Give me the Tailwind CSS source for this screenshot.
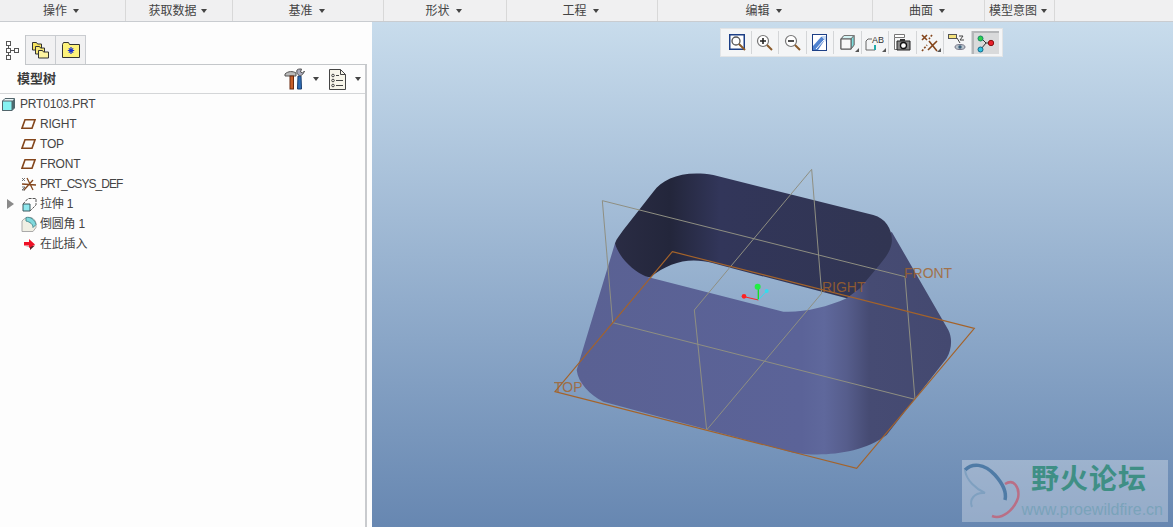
<!DOCTYPE html>
<html lang="en">
<head>
    <meta charset="UTF-8">
    <title>PRT0103</title>
    <script src="https://cdn.jsdelivr.net/npm/@tailwindcss/browser@4"></script>
</head>
<body class="w-[1173px] h-[527px] overflow-hidden bg-white font-['Liberation_Sans','Noto_Sans_CJK_SC',sans-serif] text-[12px] text-[#444]">
    <!-- menu groups -->
    <div class="flex h-[22px] bg-[#f0f0f1] border-b border-[#c9ccd0]">
        <div class="w-[126px] pr-[3px] flex items-center justify-center gap-[6px] border-r border-[#d8d8d8]">操作<span class="w-0 h-0 border-x-[3px] border-x-transparent border-t-[4px] border-t-[#444]"></span></div>
        <div class="w-[107px] pr-[3px] flex items-center justify-center gap-[4px] border-r border-[#d8d8d8]">获取数据<span class="w-0 h-0 border-x-[3px] border-x-transparent border-t-[4px] border-t-[#444]"></span></div>
        <div class="w-[151px] pr-[3px] flex items-center justify-center gap-[6px] border-r border-[#d8d8d8]">基准<span class="w-0 h-0 border-x-[3px] border-x-transparent border-t-[4px] border-t-[#444]"></span></div>
        <div class="w-[123px] pr-[3px] flex items-center justify-center gap-[6px] border-r border-[#d8d8d8]">形状<span class="w-0 h-0 border-x-[3px] border-x-transparent border-t-[4px] border-t-[#444]"></span></div>
        <div class="w-[151px] pr-[3px] flex items-center justify-center gap-[6px] border-r border-[#d8d8d8]">工程<span class="w-0 h-0 border-x-[3px] border-x-transparent border-t-[4px] border-t-[#444]"></span></div>
        <div class="w-[215px] pr-[3px] flex items-center justify-center gap-[6px] border-r border-[#d8d8d8]">编辑<span class="w-0 h-0 border-x-[3px] border-x-transparent border-t-[4px] border-t-[#444]"></span></div>
        <div class="w-[112px] pr-[3px] flex items-center justify-center gap-[6px] border-r border-[#d8d8d8]">曲面<span class="w-0 h-0 border-x-[3px] border-x-transparent border-t-[4px] border-t-[#444]"></span></div>
        <div class="w-[70px] pr-[3px] flex items-center justify-center gap-[4px] border-r border-[#d8d8d8]">模型意图<span class="w-0 h-0 border-x-[3px] border-x-transparent border-t-[4px] border-t-[#444]"></span></div>
    </div>

    <div class="flex h-[505px]">
        <!-- model tree panel -->
        <div class="w-[372px] shrink-0 bg-[#fdfdfd] pr-[5px]">
            <div class="flex h-[43px] items-end border-b border-[#c4c7ca]">
                <div class="w-[26px] h-[30px] -mb-px bg-[#fdfdfd] border-r border-[#c4c7ca] flex items-center justify-center">
                    <svg width="16" height="20" viewBox="0 0 16 20" fill="none" stroke="#555"><rect x="1.500" y="1.500" width="4" height="4"/><rect x="1.500" y="8.500" width="4" height="4"/><rect x="1.500" y="15.500" width="4" height="4"/><rect x="9.500" y="8.500" width="4" height="4"/><path d="M3.500 5.500v3M3.500 12.500v3M5.500 10.500h4"/></svg>
                </div>
                <div class="w-[30px] h-[29px] bg-[#f1f1f2] border-r border-t border-[#c9ccd0] flex items-center justify-center">
                    <svg width="20" height="20" viewBox="0 0 20 20"><path d="M1.500 2.500h4l1 1.500h4v6h-9z" fill="#f5e35e" stroke="#333"/><path d="M4.500 6.500h4l1 1.500h4v6h-9z" fill="#f7e97a" stroke="#333"/><path d="M7.500 10.500h4l1 1.500h5v6h-10z" fill="#fdf3a0" stroke="#333"/></svg>
                </div>
                <div class="w-[30px] h-[29px] bg-[#f1f1f2] border-r border-t border-[#c9ccd0] flex items-center justify-center">
                    <svg width="18" height="16" viewBox="0 0 18 16"><path d="M.5 2.500l1-2h5l1 2h10v13H.500z" fill="#fdf27a" stroke="#333"/><path d="M9 5v7M5.800 8.500h6.400M6.800 6.300l4.400 4.400M11.200 6.300l-4.400 4.400" stroke="#1a2fd0" stroke-width="1.200"/></svg>
                </div>
            </div>
            <div class="border-r-2 border-[#c9cbce] h-[462px]">
                <div class="flex items-center h-[29px] border-b border-[#d4d6d8] pl-[17px] pr-[4px]">
                    <span class="font-bold text-[13px] text-[#3c3c3c]">模型树</span>
                    <svg class="ml-auto" width="22" height="22" viewBox="0 0 22 22"><path d="M1 6c3-3 8-3 11-1v3H1z" fill="#bbb" stroke="#555"/><rect x="6" y="8" width="3.500" height="13" fill="#c8602a" stroke="#6b2a10"/><path d="M14 8l-.500 13h4L17 8z" fill="#2f6fb8" stroke="#1c3f6e"/><path d="M13 2c-1 3 1 5 2.500 5.500S19 7 20.500 3L18.500 5 16.500 4l1-3c-2 0-4 0-4.500 1z" fill="#aab" stroke="#555"/></svg>
                    <span class="ml-[7px] w-0 h-0 border-x-[3px] border-x-transparent border-t-[4px] border-t-[#444]"></span>
                    <svg class="ml-[10px]" width="17" height="21" viewBox="0 0 17 21" fill="none" stroke="#444"><path d="M.5.500h11l5 5v15H.500z" fill="#f8f6ea"/><path d="M11.500.5v5h5"/><circle cx="4" cy="6.500" r="1.300"/><circle cx="4" cy="11.500" r="1.300"/><circle cx="4" cy="16.500" r="1.300"/><path d="M7 6.500h3M7 11.500h7M7 16.500h7"/></svg>
                    <span class="ml-[9px] w-0 h-0 border-x-[3px] border-x-transparent border-t-[4px] border-t-[#444]"></span>
                </div>
                <ul class="tracking-[-0.2px]">
                    <li class="flex items-center h-5 pl-[2px] gap-[5px]">
                        <svg width="13" height="13" viewBox="0 0 13 13"><path d="M.5 3l2.500-2.500h9.500V10L10 12.500H.5z" fill="#e9f4f6" stroke="#52656b"/><path d="M.5 3H10v9.500H.5z" fill="#86f3f3" stroke="#52656b"/><path d="M10 3l2.500-2.500V10L10 12.500z" fill="#4d6a70"/></svg>
                        PRT0103.PRT
                    </li>
                    <li class="flex items-center h-5 pl-[21px] gap-[4px]">
                        <svg width="15" height="10" viewBox="0 0 15 10" fill="none" stroke="#84461c" stroke-width="1.600"><path d="M4 .8h10L11 9.200H1z"/></svg>
                        RIGHT
                    </li>
                    <li class="flex items-center h-5 pl-[21px] gap-[4px]">
                        <svg width="15" height="10" viewBox="0 0 15 10" fill="none" stroke="#84461c" stroke-width="1.600"><path d="M4 .8h10L11 9.200H1z"/></svg>
                        TOP
                    </li>
                    <li class="flex items-center h-5 pl-[21px] gap-[4px]">
                        <svg width="15" height="10" viewBox="0 0 15 10" fill="none" stroke="#84461c" stroke-width="1.600"><path d="M4 .8h10L11 9.200H1z"/></svg>
                        FRONT
                    </li>
                    <li class="flex items-center h-5 pl-[21px] gap-[3px]">
                        <svg width="16" height="16" viewBox="0 0 16 16" fill="none" stroke="#84461c" stroke-width="1.300"><path d="M1 8l14 1M3 14l9-10M6 2l6 12"/><path d="M1 2l3 3M4 2L1 5M1 11h3l-3 3h3" stroke="#555" stroke-width=".8"/></svg>
                        <span class="tracking-[-0.95px]">PRT_CSYS_DEF</span>
                    </li>
                    <li class="flex items-center h-5 pl-[7px] gap-[3px]">
                        <span class="w-0 h-0 border-y-[5px] border-y-transparent border-l-[7px] border-l-[#8a8a8a]"></span>
                        <svg class="ml-[5px]" width="15" height="15" viewBox="0 0 15 15"><path d="M1 7h7v7H1z" fill="#8fe8ee" stroke="#3c5a60"/><path d="M1 7l5-5.500h8V8l-6 6" fill="none" stroke="#555" stroke-dasharray="3 1"/></svg>
                        拉伸 1
                    </li>
                    <li class="flex items-center h-5 pl-[21px] gap-[3px]">
                        <svg width="16" height="16" viewBox="0 0 16 16"><path d="M1 5c2-3 6-4 9-3.500 3 1 5 4 5 7v3l-3 4H1z" fill="#f0efe4" stroke="#aaa"/><path d="M5 1.500c4-1 9 2 10 7l-3 3C12 8 9 6 5 5z" fill="#7fd9dd" stroke="#4d8e93"/></svg>
                        倒圆角 1
                    </li>
                    <li class="flex items-center h-5 pl-[24px] gap-[5px]">
                        <svg width="11" height="11" viewBox="0 0 11 11"><path d="M1 7.500h5V11l5-4.500z" fill="#5c2028"/><path d="M0 3h5V0l6 5.500L5 9V6.500H0z" fill="#ee1026"/></svg>
                        在此插入
                    </li>
                </ul>
            </div>
        </div>

        <!-- graphics window -->
        <div class="relative flex-1 bg-linear-to-b from-[#c8dcec] to-[#6787b1]">
            <svg class="absolute inset-0" width="801" height="505" viewBox="0 0 801 505">
                <defs>
                    <linearGradient id="outer" gradientUnits="userSpaceOnUse" x1="110" y1="0" x2="1235" y2="0">
                        <stop offset="0" stop-color="#5a6193"/>
                        <stop offset=".6" stop-color="#5b6398"/>
                        <stop offset=".66" stop-color="#5f689c"/>
                        <stop offset=".72" stop-color="#565d8c"/>
                        <stop offset=".78" stop-color="#464b73"/>
                        <stop offset="1" stop-color="#444970"/>
                    </linearGradient>
                    <linearGradient id="inner" gradientUnits="userSpaceOnUse" x1="225" y1="0" x2="1055" y2="0">
                        <stop offset="0" stop-color="#2a2c44"/>
                        <stop offset=".2" stop-color="#23263b"/>
                        <stop offset=".38" stop-color="#32365a"/>
                        <stop offset="1" stop-color="#313552"/>
                    </linearGradient>
                </defs>
                <g transform="translate(168 138) scale(.33333)">
                    <path fill="url(#outer)" d="M225 250L110 630C115 670 150 705 190 725L760 878C840 890 960 885 1040 825L1220 595C1235 570 1238 535 1225 510L1055 215L920 415C860 442 790 458 730 455L320 350Z"/>
                    <path fill="url(#inner)" d="M225 250C230 235 240 225 250 210L340 95C370 55 430 30 520 45L1000 165C1040 175 1060 215 1055 250C1050 280 1030 300 1010 325L960 385L920 415L520 310C450 290 390 305 330 352L320 350C280 335 235 290 225 250Z"/>
                    <g fill="none" stroke="#8f8f82" stroke-width="3">
                        <path d="M187 122L1095 350L1125 718L218 488Z"/>
                        <path d="M815 28L845 400L500 810L463 450Z"/>
                    </g>
                    <path d="M397 275L1303 505L950 925L45 695Z" fill="none" stroke="#a4632a" stroke-width="3.500"/>
                    <g fill="#a4632a" font-size="42" opacity=".8">
                        <text x="1092" y="353">FRONT</text>
                        <text x="846" y="396">RIGHT</text>
                        <text x="42" y="695">TOP</text>
                    </g>
                    <path d="M655 420L612 410" stroke="#f22" stroke-width="3"/>
                    <path d="M655 420V382" stroke="#1d2" stroke-width="4"/>
                    <path d="M655 420L680 393" stroke="#3de" stroke-width="3"/>
                    <circle cx="612" cy="409" r="7" fill="#f22"/>
                    <circle cx="653" cy="380" r="9" fill="#2e4"/>
                    <circle cx="680" cy="393" r="6" fill="#3de"/>
                </g>
            </svg>

            <!-- view toolbar -->
            <div class="absolute left-[348px] top-[6px] flex h-[29px] px-[3px] py-[2px] bg-[#f4f5f6] border border-[#e2e4e6]">
                <div class="w-[27.5px] flex items-center justify-center border-r border-[#d4d6d8]">
                    <svg width="17" height="17" viewBox="0 0 17 17" fill="none"><rect x=".75" y=".75" width="14.500" height="14.500" stroke="#1c3f86" stroke-width="1.500" fill="#fff"/><circle cx="7" cy="7" r="4" stroke="#555" stroke-width="1.300"/><path d="M10 10l6 6" stroke="#8a5a2a" stroke-width="2"/></svg>
                </div>
                <div class="w-[27.5px] flex items-center justify-center border-r border-[#d4d6d8]">
                    <svg width="17" height="17" viewBox="0 0 17 17" fill="none"><circle cx="7" cy="7" r="5.500" stroke="#777" stroke-width="1.200" fill="#fff"/><path d="M4 7h6M7 4v6" stroke="#222" stroke-width="1.600"/><path d="M11 11l5 5" stroke="#8a5a2a" stroke-width="2"/></svg>
                </div>
                <div class="w-[27.5px] flex items-center justify-center border-r border-[#d4d6d8]">
                    <svg width="17" height="17" viewBox="0 0 17 17" fill="none"><circle cx="7" cy="7" r="5.500" stroke="#777" stroke-width="1.200" fill="#fff"/><path d="M4 7h6" stroke="#222" stroke-width="1.600"/><path d="M11 11l5 5" stroke="#8a5a2a" stroke-width="2"/></svg>
                </div>
                <div class="w-[27.5px] flex items-center justify-center border-r border-[#d4d6d8]">
                    <svg width="15" height="17" viewBox="0 0 15 17"><rect x=".5" y=".5" width="14" height="16" fill="#fff" stroke="#1c3f86"/><path d="M1 16V12L9 3h3v4L6 16z" fill="#4f82d0"/><path d="M9 2h5v6z" fill="#c4d8f2"/><path d="M4 15l8-9" stroke="#fff"/></svg>
                </div>
                <div class="relative w-[27.5px] flex items-center justify-center border-r border-[#d4d6d8]">
                    <svg width="15" height="15" viewBox="0 0 15 15"><path d="M1 4l3-3.500h10V10l-3 4H1z" fill="#ecf8f8" stroke="#555"/><path d="M4 .5h10L11 4H1z" fill="#d4f4f4" stroke="#777"/><path d="M11 4l3-3.500V10l-3 4z" fill="#7adcdc" stroke="#777"/><rect x="1" y="4" width="10" height="10" fill="#f8f8f8" stroke="#555"/></svg>
                    <span class="absolute right-[2px] bottom-[2px] w-0 h-0 border-l-[4px] border-l-transparent border-b-[4px] border-b-[#555]"></span>
                </div>
                <div class="relative w-[27.5px] flex items-center justify-center border-r border-[#d4d6d8]">
                    <svg width="19" height="17" viewBox="0 0 19 17" fill="none"><path d="M1 7l2-2h4M1 7v9h9v-3" stroke="#666"/><path d="M10 11v5" stroke="#2aa" stroke-width="2"/><text x="7" y="9" fill="#333" font-size="9" font-family="Liberation Sans">AB</text></svg>
                    <span class="absolute right-[2px] bottom-[2px] w-0 h-0 border-l-[4px] border-l-transparent border-b-[4px] border-b-[#555]"></span>
                </div>
                <div class="w-[27.5px] flex items-center justify-center border-r border-[#d4d6d8]">
                    <svg width="17" height="17" viewBox="0 0 17 17"><path d="M.5.500h10v3H.5zM.5 3.500v12h3" fill="#fff" stroke="#777"/><path d="M3 7h13v9H3z" fill="#888" stroke="#222"/><rect x="6" y="5" width="5" height="2" fill="#333"/><circle cx="9.500" cy="11.500" r="3" fill="#fff" stroke="#111" stroke-width="1.300"/></svg>
                </div>
                <div class="relative w-[27.5px] flex items-center justify-center border-r border-[#d4d6d8]">
                    <svg width="18" height="18" viewBox="0 0 18 18" fill="none" stroke="#84461c" stroke-width="1.600"><path d="M1 1l5 5M6 1L1 6M7 16l9-9M8 7l8 10"/><path d="M1 17l5-6M11 1l-3 4" stroke-dasharray="2 1.500"/></svg>
                    <span class="absolute right-[2px] bottom-[2px] w-0 h-0 border-l-[4px] border-l-transparent border-b-[4px] border-b-[#555]"></span>
                </div>
                <div class="w-[27.5px] flex items-center justify-center border-r border-[#d4d6d8]">
                    <svg width="19" height="19" viewBox="0 0 19 19" fill="none"><rect x=".5" y="1.500" width="8" height="4" fill="#f4e27c" stroke="#555"/><path d="M11 3h4l-3 4h4M9 5l3 5" stroke="#444"/><ellipse cx="12" cy="14" rx="5" ry="2.500" fill="#b9c4cc" stroke="#778"/><circle cx="12" cy="14" r="1.700" fill="#3a5f7a"/></svg>
                </div>
                <div class="w-[27.5px] flex items-center justify-center bg-[#d9dadb] border-t-2 border-l-2 border-[#b4b6b8]">
                    <svg width="18" height="18" viewBox="0 0 18 18" stroke="#333"><path d="M4 3l5 5h5M4 14l5-6" fill="none"/><circle cx="3.500" cy="3.500" r="2.500" fill="#2ed14a" stroke="#186"/><circle cx="14" cy="8" r="2.700" fill="#e8202a" stroke="#811"/><circle cx="3.500" cy="14.500" r="2.500" fill="#2fc4e0" stroke="#168"/></svg>
                </div>
            </div>

            <!-- forum watermark -->
            <div class="absolute left-[590px] top-[438px] w-[206px] h-[62px] bg-white/30 flex justify-end">
                <svg class="absolute left-0 top-0" width="60" height="62" viewBox="0 0 60 62" fill="none">
                    <path d="M3 10C10 3 22 3 33 15C41 24 45 32 43 40" stroke="#4f7ba6" stroke-width="3.500"/>
                    <path d="M3 10C4 20 14 29 23 33C12 32 7 40 10 47" stroke="#7fa0c0" stroke-width="2"/>
                    <path d="M43 24C52 18 58 28 56 38C52 50 40 60 30 56" stroke="#b96f86" stroke-width="2.500"/>
                </svg>
                <div class="w-[144px] mr-[5px] flex flex-col items-end">
                    <div class="w-[120px] mt-[-1px] mr-[12px] text-[28px] leading-[42px] font-bold tracking-[1px] whitespace-nowrap text-[#3f8f85]">野火论坛</div>
                    <div class="text-[16px] leading-[18px] text-[#7aa3ba] whitespace-nowrap">www.proewildfire.cn</div>
                </div>
            </div>
        </div>
    </div>
</body>
</html>
